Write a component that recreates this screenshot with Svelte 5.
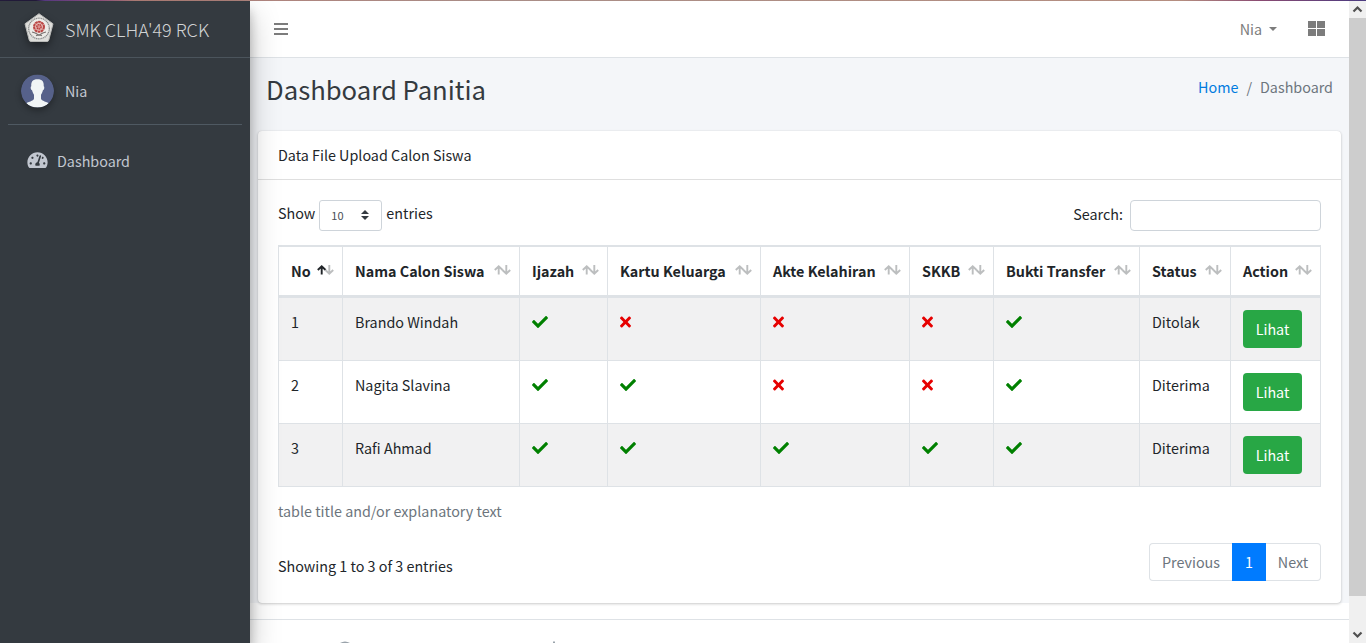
<script>
  const columns = [
    { label: 'No', width: 64, sorted: true },
    { label: 'Nama Calon Siswa', width: 177 },
    { label: 'Ijazah', width: 88 },
    { label: 'Kartu Keluarga', width: 153 },
    { label: 'Akte Kelahiran', width: 149 },
    { label: 'SKKB', width: 84 },
    { label: 'Bukti Transfer', width: 146 },
    { label: 'Status', width: 91 },
    { label: 'Action', width: 89 }
  ];
  const rows = [
    { no: 1, name: 'Brando Windah', files: [true, false, false, false, true], status: 'Ditolak' },
    { no: 2, name: 'Nagita Slavina', files: [true, true, false, false, true], status: 'Diterima' },
    { no: 3, name: 'Rafi Ahmad', files: [true, true, true, true, true], status: 'Diterima' }
  ];
</script>

<div class="screen">
  <div class="strip"></div>
  <div class="window">
    <aside>
      <div class="brand">
        <svg class="logo" width="33" height="33" viewBox="0 0 33 33">
          <path d="M17 1.700 31 11.800 26.800 28 Q26.400 29.500 25 29.500H9Q7.600 29.500 7.200 28L3 11.800Z" fill="#dededb" stroke="#b9bab8" stroke-width="1" stroke-linejoin="round" />
          <circle cx="17" cy="16.500" r="10.300" fill="#ecebe8" stroke="#8b8c8c" stroke-width="1.300" stroke-dasharray="1.200 .6" />
          <circle cx="17" cy="14.800" r="5" fill="#e3b5b2" stroke="#bb4644" stroke-width="2" stroke-dasharray="2.700 .45" />
          <circle cx="17" cy="14.800" r="2.200" fill="#d98f8c" stroke="#b93c3a" stroke-width="1.300" stroke-dasharray="1.500 .5" />
          <path d="M10 20q3 .5 7 3.200 4-2.700 7-3.200M14 23.800l3-1 3 1" fill="none" stroke="#77706e" stroke-width="1.200" />
        </svg>
        <span>SMK CLHA'49 RCK</span>
      </div>
      <div class="user">
        <svg class="avatar" width="33" height="34" viewBox="0 0 34 34">
          <defs><clipPath id="disc"><circle cx="17" cy="17" r="17" /></clipPath></defs>
          <g clip-path="url(#disc)">
            <rect width="34" height="34" fill="#56618a" />
            <path d="M17 5C12 5 10.300 7.500 10.600 12c-1 .1-.7 3.800.8 4.300.5 2.400 1.500 3.700 2 4.500v4C13 28 7 27.500 4 31v3h26v-3c-3-3.500-9-3-9.400-6.200v-4c.6-.8 1.500-2.100 2-4.500 1.500-.5 1.800-4.200.8-4.300C23.700 7.500 22 5 17 5Z" fill="#f1f5f6" />
          </g>
        </svg>
        <span>Nia</span>
      </div>
      <nav>
        <svg width="21" height="18" viewBox="0 0 576 512">
          <path fill="#c2c7d0" d="M288 32C128.940 32 0 160.940 0 320c0 52.800 14.250 102.260 39.060 144.800 5.610 9.620 16.300 15.200 27.440 15.200h443c11.140 0 21.830-5.580 27.440-15.200C561.750 422.260 576 372.800 576 320c0-159.060-128.940-288-288-288zm0 64c14.710 0 26.580 10.130 30.320 23.650-1.110 2.260-2.640 4.230-3.450 6.670l-9.220 27.670c-5.130 3.490-10.970 6.010-17.640 6.010-17.670 0-32-14.330-32-32S270.330 96 288 96zM96 384c-17.670 0-32-14.330-32-32s14.330-32 32-32 32 14.330 32 32-14.330 32-32 32zm48-160c-17.670 0-32-14.330-32-32s14.330-32 32-32 32 14.330 32 32-14.330 32-32 32zm246.770-72.410-61.330 184C343.130 347.330 352 364.540 352 384c0 11.720-3.380 22.550-8.880 32H232.880c-5.500-9.450-8.880-20.280-8.880-32 0-33.940 26.500-61.430 59.900-63.590l61.340-184.010c4.170-12.560 17.730-19.450 30.360-15.170 12.570 4.190 19.350 17.790 15.170 30.360zm14.660 57.200 15.520-46.550c3.470-1.290 7.130-2.230 11.050-2.230 17.670 0 32 14.330 32 32s-14.330 31.990-32 31.990c-11.380-.01-20.890-6.280-26.570-15.210zM480 384c-17.670 0-32-14.330-32-32s14.330-32 32-32 32 14.330 32 32-14.330 32-32 32z" />
        </svg>
        <span>Dashboard</span>
      </nav>
    </aside>

    <main>
      <header>
        <svg width="14" height="14" viewBox="0 0 14 14"><path d="M0 2h14M0 7h14M0 12h14" stroke="#7c7c7c" stroke-width="2" /></svg>
        <div class="account">
          <span>Nia</span><i class="caret"></i>
          <svg width="17" height="15" viewBox="0 0 17 15"><path d="M0 0h8v7H0zM9 0h8v7H9zM0 8h8v7H0zM9 8h8v7H9z" fill="#7c7c7c" /></svg>
        </div>
      </header>

      <div class="content">
        <div class="title">
          <h1>Dashboard Panitia</h1>
          <div class="crumbs"><a href="#home">Home</a><span class="slash">/</span><span>Dashboard</span></div>
        </div>

        <section class="card">
          <div class="card-head">Data File Upload Calon Siswa</div>
          <div class="card-body">
            <div class="controls">
              <div class="length">
                <span>Show</span>
                <div class="select">
                  <span>10</span>
                  <svg width="8" height="10" viewBox="0 0 8 10"><path d="M0 4 4 0l4 4zM0 6l4 4 4-4z" fill="#343a40" /></svg>
                </div>
                <span>entries</span>
              </div>
              <label class="search"><span>Search:</span><input type="text" /></label>
            </div>

            <table>
              <colgroup>
                {#each columns as c}<col style="width: {c.width}px" />{/each}
              </colgroup>
              <thead>
                <tr>
                  {#each columns as c}
                    <th>
                      <div class="th">
                        <span>{c.label}</span>
                        <svg width="17" height="11" viewBox="0 0 17 11" fill="none" stroke-width="1.900">
                          <path d="M4.700 9.500V1.500M.8 5 4.700 1.300 8.600 5" stroke={c.sorted ? '#212529' : '#bcbebf'} />
                          <path d="M12.300 0v8.500M8.400 5l3.900 3.700L16.200 5" stroke="#bcbebf" />
                        </svg>
                      </div>
                    </th>
                  {/each}
                </tr>
              </thead>
              <tbody>
                {#each rows as r}
                  <tr>
                    <td>{r.no}</td>
                    <td>{r.name}</td>
                    {#each r.files as ok}
                      <td>
                        {#if ok}
                          <svg class="mark" width="16" height="16" viewBox="0 0 512 512"><path fill="green" d="M173.898 439.404l-166.400-166.400c-9.997-9.997-9.997-26.206 0-36.204l36.203-36.204c9.997-9.998 26.207-9.998 36.204 0L192 312.690 432.095 72.596c9.997-9.997 26.207-9.997 36.204 0l36.203 36.204c9.997 9.997 9.997 26.206 0 36.204l-294.400 294.401c-9.998 9.997-26.207 9.997-36.204-.001z" /></svg>
                        {:else}
                          <svg class="mark" width="11" height="16" viewBox="0 0 352 512"><path fill="#e60000" d="M242.720 256l100.070-100.070c12.280-12.280 12.280-32.190 0-44.480l-22.240-22.240c-12.280-12.280-32.190-12.280-44.480 0L176 189.280 75.930 89.210c-12.280-12.280-32.190-12.280-44.480 0L9.210 111.450c-12.280 12.280-12.280 32.190 0 44.480L109.280 256 9.210 356.070c-12.280 12.280-12.280 32.190 0 44.480l22.240 22.240c12.280 12.280 32.200 12.280 44.480 0L176 322.720l100.070 100.070c12.280 12.280 32.200 12.280 44.480 0l22.240-22.240c12.280-12.280 12.280-32.190 0-44.480L242.720 256z" /></svg>
                        {/if}
                      </td>
                    {/each}
                    <td>{r.status}</td>
                    <td><button>Lihat</button></td>
                  </tr>
                {/each}
              </tbody>
            </table>

            <p class="caption">table title and/or explanatory text</p>
            <div class="foot">
              <span class="info">Showing 1 to 3 of 3 entries</span>
              <div class="pager"><span class="prev">Previous</span><span class="current">1</span><span class="next">Next</span></div>
            </div>
          </div>
        </section>
      </div>
      <footer>
        <svg width="240" height="2" viewBox="0 0 240 2"><path d="M0 2q2.500-1.600 5-1.600T10 2M213 .5h2V2h-2z" fill="#9aa3ab" /></svg>
      </footer>
    </main>

    <div class="scrollbar">
      <svg width="17" height="17" viewBox="0 0 17 17"><path d="M4.500 10.500l4-4 4 4" fill="none" stroke="#505050" stroke-width="2.200" /></svg>
      <div class="thumb"></div>
      <svg width="17" height="17" viewBox="0 0 17 17"><path d="M4.500 6.500l4 4 4-4" fill="none" stroke="#505050" stroke-width="2.200" /></svg>
    </div>
  </div>
</div>

<style>
  :global(body) { margin: 0; overflow: hidden; }
  .screen, .screen * { box-sizing: border-box; }
  .screen {
    width: 1366px; height: 643px; overflow: hidden; background: #fff; color: #212529;
    font-family: "Noto Sans CJK SC", "Noto Sans CJK JP", "Open Sans", sans-serif;
    font-size: 14.33px; line-height: 24px; white-space: nowrap;
    display: flex; flex-direction: column;
  }
  svg { display: block; flex: none; }
  .strip { height: 1px; flex: none; background: linear-gradient(90deg, #241c3c 0 36px, #5b3d86 45px, #8d4d80 95px, #b17f78 135px, #a98d87 500px, #b58e80 1180px, #8a4b72 1260px, #4a3a80 1366px); }
  .window { display: flex; flex: 1; min-height: 0; }

  aside { width: 250px; flex: none; background: #343a40; color: #c2c7d0; position: relative; z-index: 2; box-shadow: 0 14px 28px rgba(0,0,0,.25), 0 10px 10px rgba(0,0,0,.22); }
  .brand { height: 57px; border-bottom: 1px solid #4b545c; display: flex; align-items: center; padding: 0 0 2px 22px; gap: 10px; font-size: 18px; font-weight: 300; color: #d1d3d4; }
  .brand span { padding-top: 2px; }
  .logo { filter: drop-shadow(0 4px 4px rgba(0,0,0,.4)); }
  .user { margin: 0 8px; height: 67px; border-bottom: 1px solid #4f5962; display: flex; align-items: center; padding-left: 13px; gap: 11px; }
  .avatar { border-radius: 50%; box-shadow: 0 3px 6px rgba(0,0,0,.3); }
  nav { display: flex; align-items: center; gap: 8px; padding: 24px 0 0 28px; }
  nav svg { margin: -2px 0 0 -1px; }
  nav span { padding-left: 1px; }

  main { flex: 1; min-width: 0; display: flex; flex-direction: column; }
  header { height: 57px; flex: none; border-bottom: 1px solid #dee2e6; display: flex; align-items: center; justify-content: space-between; padding: 0 24px 0 24px; color: #7c7c7c; }
  .account { display: flex; align-items: center; }
  .caret { width: 0; border: 4.500px solid transparent; border-top-color: #7c7c7c; border-bottom: 0; margin: 0 31px 0 7px; }
  .account svg { margin-top: -1px; }
  .content { background: #f4f6f9; height: 545px; flex: none; padding: 0 8px; }
  .title { height: 73px; display: flex; justify-content: space-between; padding: 13px 8px 0; }
  h1 { margin: 0; font-size: 25.700px; line-height: 35px; font-weight: 400; color: #343a40; }
  .crumbs { display: flex; gap: 8px; padding-top: 4px; color: #6c757d; }
  a { color: #007bdf; text-decoration: none; }

  .card { height: 472px; background: #fff; border-radius: 4px; box-shadow: 0 0 1px rgba(0,0,0,.13), 0 1px 3px rgba(0,0,0,.2); }
  .card-head { height: 49px; border-bottom: 1px solid #dfdfdf; padding: 12px 20px; }
  .card-body { padding: 20px 20px 0; }
  .controls { height: 45px; display: flex; justify-content: space-between; align-items: flex-start; }
  .length { display: flex; align-items: center; gap: 4px; height: 31px; }
  .length > span { margin-top: -6px; }
  .select { width: 63px; height: 31px; border: 1px solid #ced4da; border-radius: 3px; padding: 0 12px; display: flex; align-items: center; justify-content: space-between; font-size: 11px; color: #495057; }
  .select span { margin: -2px 0 0 -1px; }
  .select svg { margin-top: -2px; }
  .search { display: flex; align-items: center; gap: 7px; }
  .search span { margin-top: -4px; }
  input { width: 191px; height: 31px; border: 1px solid #ced4da; border-radius: 4px; background: #fff; padding: 0 8px; }

  table { width: 1043px; table-layout: fixed; border-collapse: separate; border-spacing: 0; border: 1px solid #dee2e6; }
  th, td { border: 0 solid #dee2e6; border-top-width: 1px; border-right-width: 1px; padding: 12px; text-align: left; vertical-align: top; }
  th:last-child, td:last-child { border-right: 0; }
  th { border-bottom-width: 2px; height: 51px; padding-right: 8px; font-weight: 700; }
  .th { display: flex; justify-content: space-between; align-items: center; }
  .th svg { margin-top: -1px; }
  td { height: 63px; }
  tbody tr:nth-child(odd) { background: #f1f1f2; }
  .mark { margin-top: 4px; }
  button { display: block; width: 59px; height: 38px; padding: 0; border: 0; border-radius: 4px; background: #28a745; color: #fff; font: inherit; }
  .caption { margin: 12px 0 0; color: #6c757d; }
  .foot { display: flex; justify-content: space-between; margin-top: 20px; }
  .info { padding-top: 11px; }
  .pager { display: flex; height: 38px; color: #6c757d; line-height: 36px; text-align: center; }
  .pager span { border: 1px solid #dee2e6; }
  .pager .prev { width: 83px; border-right: 0; border-radius: 4px 0 0 4px; }
  .pager .current { width: 34px; background: #007bff; border-color: #007bff; color: #fff; }
  .pager .next { width: 55px; border-left: 0; border-radius: 0 4px 4px 0; }
  footer { margin-top: 16px; border-top: 1px solid #dee2e6; padding: 21px 0 0 90px; flex: none; }

  .scrollbar { width: 17px; flex: none; background: #f0f0f0; display: flex; flex-direction: column; }
  .thumb { height: 578px; background: #cdcdcd; margin-bottom: auto; }
</style>
